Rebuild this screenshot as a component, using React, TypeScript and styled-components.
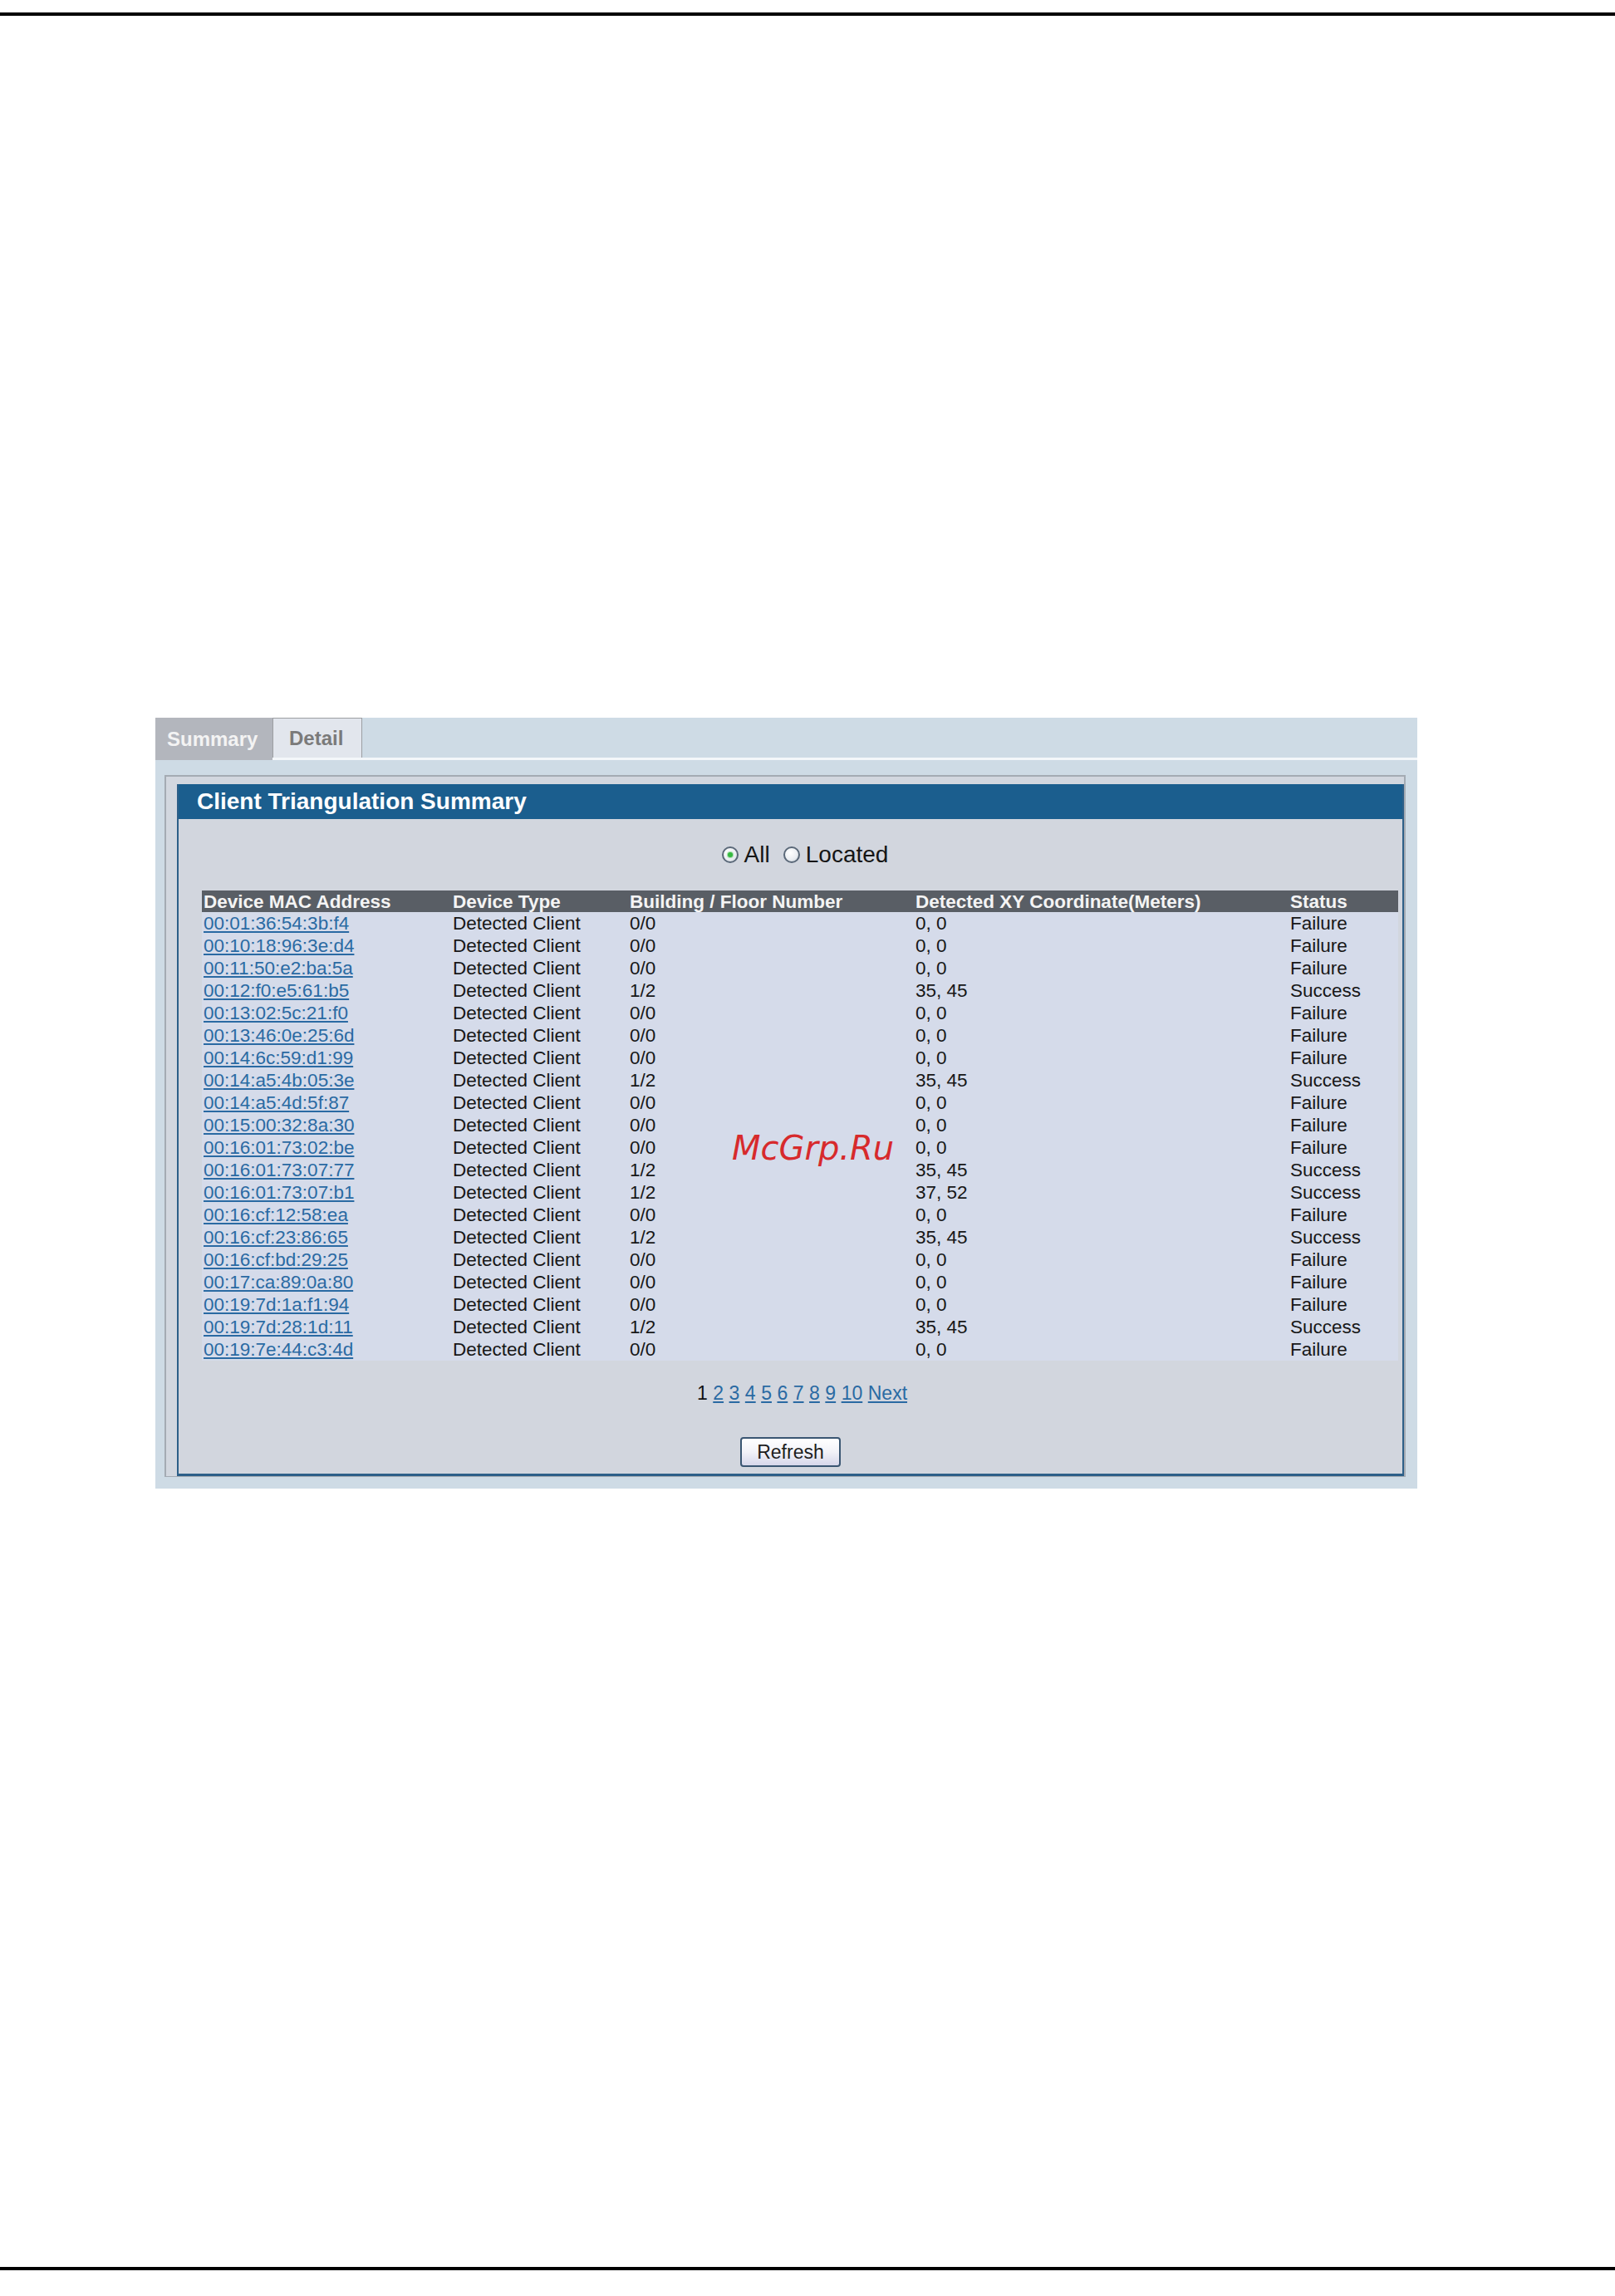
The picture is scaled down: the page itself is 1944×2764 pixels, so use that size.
import React from "react";
import styled, { createGlobalStyle } from "styled-components";

const GlobalStyle = createGlobalStyle`
  html, body { margin: 0; padding: 0; background: #ffffff; }
  body { font-family: "Liberation Sans", Arial, sans-serif; }
  *, *::before, *::after { box-sizing: border-box; }
`;

const Page = styled.div`
  width: 1944px;
  min-height: 2764px;
  display: flex;
  flex-direction: column;
  background: #ffffff;
`;

const Rule = styled.div<{ $top: number }>`
  margin-top: ${(p) => p.$top}px;
  height: 4px;
  background: #000;
  width: 100%;
`;

const Panel = styled.div`
  position: relative;
  margin-top: 845px;
  margin-left: 187px;
  width: 1519px;
  height: 928px;
  background: #cedbe5;
  display: flex;
  flex-direction: column;
`;

const TabStrip = styled.div`
  display: flex;
  align-items: stretch;
  height: 51px;
  border-bottom: 3px solid #f4f7fa;
`;

const Tab = styled.div<{ $active?: boolean }>`
  display: flex;
  align-items: center;
  width: ${(p) => (p.$active ? 141 : 108)}px;
  padding-left: ${(p) => (p.$active ? 14 : 19)}px;
  font-size: 24px;
  font-weight: bold;
  background: ${(p) => (p.$active ? "#b3b6bd" : "#e2e6ed")};
  color: ${(p) => (p.$active ? "#f3f3f3" : "#7a7a7a")};
  border: ${(p) => (p.$active ? "none" : "1px solid #9c9ea2")};
  border-bottom: none;
  margin-bottom: ${(p) => (p.$active ? "-3px" : "0")};
`;

const GrayBox = styled.div`
  margin: 18px 14px 0 11px;
  border: 2px solid #a4abb3;
  border-bottom-width: 1px;
  padding: 9px 0 0 13px;
  background: #d2d7df;
  display: flex;
  flex-direction: column;
`;

const ContentBox = styled.div`
  border-left: 2px solid #2d5f88;
  border-right: 2px solid #2d5f88;
  border-bottom: 3px solid #2d5f88;
  background: #d2d6de;
  display: flex;
  flex-direction: column;
  align-items: center;
  padding-bottom: 8px;
`;

const HeaderBar = styled.div`
  align-self: stretch;
  height: 42px;
  background: #1b5e8e;
  color: #ffffff;
  font-size: 28px;
  font-weight: bold;
  display: flex;
  align-items: center;
  padding-left: 22px;
`;

const RadioRow = styled.div`
  height: 86px;
  display: flex;
  align-items: center;
  gap: 16px;
  padding-left: 35px;
  font-size: 28px;
  color: #151515;
`;

const RadioLabel = styled.label`
  display: flex;
  align-items: center;
`;

const RadioCircle = styled.span<{ $checked?: boolean }>`
  position: relative;
  width: 20px;
  height: 20px;
  border-radius: 50%;
  border: 2px solid #5a6878;
  background: radial-gradient(circle at 40% 35%, #ffffff 0%, #eceff3 55%, #c6cdd6 100%);
  margin-right: 7px;
  &::after {
    content: "";
    display: ${(p) => (p.$checked ? "block" : "none")};
    position: absolute;
    left: 5px;
    top: 5px;
    width: 6px;
    height: 6px;
    border-radius: 50%;
    background: #35b93f;
    box-shadow: 0 0 1px 1px rgba(53, 185, 63, 0.45);
  }
`;

const Table = styled.table`
  align-self: flex-start;
  margin-left: 28px;
  width: 1440px;
  border-collapse: collapse;
  table-layout: fixed;
  font-size: 22.5px;
`;

const HeadCell = styled.th<{ $w: number }>`
  width: ${(p) => p.$w}px;
  height: 26px;
  padding: 1px 0 0 2px;
  background: #595e65;
  color: #f4f4f4;
  font-weight: bold;
  text-align: left;
  white-space: nowrap;
  line-height: 25px;
`;

const Row = styled.tr`
  background: #d5dbea;
`;

const Cell = styled.td`
  height: 27px;
  padding: 1px 0 0 2px;
  color: #171717;
  line-height: 26px;
  white-space: nowrap;
`;

const MacLink = styled.a`
  color: #2a6aa3;
  text-decoration: underline;
`;

const Pager = styled.div`
  margin-top: 26px;
  margin-left: 28px;
  font-size: 23px;
  line-height: 27px;
  color: #111;
  display: flex;
  gap: 6.5px;
`;

const PageLink = styled.a`
  color: #2a6aa3;
  text-decoration: underline;
`;

const RefreshButton = styled.button`
  margin-top: 39px;
  width: 121px;
  height: 36px;
  border: 2px solid #3a5672;
  border-radius: 4px;
  background: linear-gradient(#ffffff 0%, #f2f2f8 50%, #d6d7ea 100%);
  font-family: "Liberation Sans", Arial, sans-serif;
  font-size: 23px;
  color: #1d1d1d;
  padding: 0;
`;

const Watermark = styled.div`
  position: absolute;
  left: 694px;
  top: 498px;
  font-family: "DejaVu Sans", sans-serif;
  font-style: oblique;
  font-size: 40px;
  line-height: 40px;
  color: #d72a2c;
  white-space: nowrap;
`;

type Entry = [string, string, string, string];

const rows: Entry[] = [
  ["00:01:36:54:3b:f4", "0/0", "0, 0", "Failure"],
  ["00:10:18:96:3e:d4", "0/0", "0, 0", "Failure"],
  ["00:11:50:e2:ba:5a", "0/0", "0, 0", "Failure"],
  ["00:12:f0:e5:61:b5", "1/2", "35, 45", "Success"],
  ["00:13:02:5c:21:f0", "0/0", "0, 0", "Failure"],
  ["00:13:46:0e:25:6d", "0/0", "0, 0", "Failure"],
  ["00:14:6c:59:d1:99", "0/0", "0, 0", "Failure"],
  ["00:14:a5:4b:05:3e", "1/2", "35, 45", "Success"],
  ["00:14:a5:4d:5f:87", "0/0", "0, 0", "Failure"],
  ["00:15:00:32:8a:30", "0/0", "0, 0", "Failure"],
  ["00:16:01:73:02:be", "0/0", "0, 0", "Failure"],
  ["00:16:01:73:07:77", "1/2", "35, 45", "Success"],
  ["00:16:01:73:07:b1", "1/2", "37, 52", "Success"],
  ["00:16:cf:12:58:ea", "0/0", "0, 0", "Failure"],
  ["00:16:cf:23:86:65", "1/2", "35, 45", "Success"],
  ["00:16:cf:bd:29:25", "0/0", "0, 0", "Failure"],
  ["00:17:ca:89:0a:80", "0/0", "0, 0", "Failure"],
  ["00:19:7d:1a:f1:94", "0/0", "0, 0", "Failure"],
  ["00:19:7d:28:1d:11", "1/2", "35, 45", "Success"],
  ["00:19:7e:44:c3:4d", "0/0", "0, 0", "Failure"],
];

const columns: [string, number][] = [
  ["Device MAC Address", 300],
  ["Device Type", 213],
  ["Building / Floor Number", 344],
  ["Detected XY Coordinate(Meters)", 451],
  ["Status", 132],
];

export default function App() {
  return (
    <Page>
      <GlobalStyle />
      <Rule $top={15} />
      <Panel>
        <TabStrip>
          <Tab $active>Summary</Tab>
          <Tab>Detail</Tab>
        </TabStrip>
        <GrayBox>
          <ContentBox>
            <HeaderBar>Client Triangulation Summary</HeaderBar>
            <RadioRow>
              <RadioLabel>
                <RadioCircle $checked />
                All
              </RadioLabel>
              <RadioLabel>
                <RadioCircle />
                Located
              </RadioLabel>
            </RadioRow>
            <Table>
              <thead>
                <tr>
                  {columns.map(([label, w]) => (
                    <HeadCell key={label} $w={w}>
                      {label}
                    </HeadCell>
                  ))}
                </tr>
              </thead>
              <tbody>
                {rows.map(([mac, floor, xy, status]) => (
                  <Row key={mac}>
                    <Cell>
                      <MacLink href="#">{mac}</MacLink>
                    </Cell>
                    <Cell>Detected Client</Cell>
                    <Cell>{floor}</Cell>
                    <Cell>{xy}</Cell>
                    <Cell>{status}</Cell>
                  </Row>
                ))}
              </tbody>
            </Table>
            <Pager>
              <span>1</span>
              {["2", "3", "4", "5", "6", "7", "8", "9", "10", "Next"].map((p) => (
                <PageLink key={p} href="#">
                  {p}
                </PageLink>
              ))}
            </Pager>
            <RefreshButton type="button">Refresh</RefreshButton>
          </ContentBox>
        </GrayBox>
        <Watermark>McGrp.Ru</Watermark>
      </Panel>
      <Rule $top={937} />
    </Page>
  );
}
